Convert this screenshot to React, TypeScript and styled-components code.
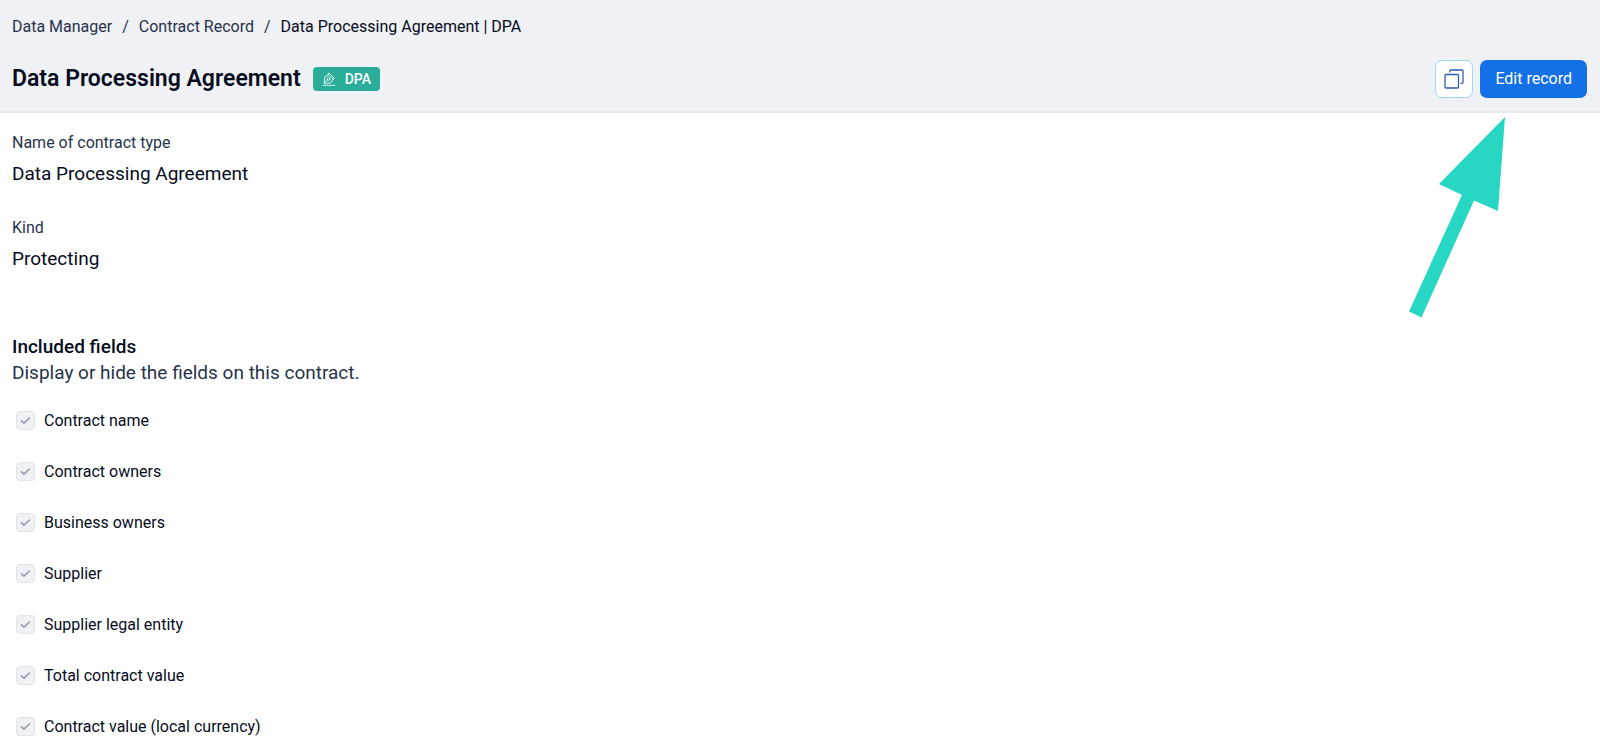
import React from "react";
import styled, { createGlobalStyle } from "styled-components";

const GlobalStyle = createGlobalStyle`
  *, *::before, *::after { box-sizing: border-box; }
  body {
    margin: 0;
    background: #ffffff;
    color: #070c1d;
    font-family: Roboto, "Liberation Sans", sans-serif;
    font-size: 16px;
    line-height: 24px;
    overflow-x: hidden;
    scrollbar-width: none;
  }
`;

const Page = styled.div`
  position: relative;
`;

const Header = styled.header`
  padding: 15px 13px 13px 12px;
  background: #f0f1f5;
  border-bottom: 2px solid #e6e8ed;
`;

const Crumbs = styled.ol`
  display: flex;
  gap: 10px;
  margin: 0;
  padding: 0;
  list-style: none;
  color: #26334b;
`;

const Crumb = styled.li`
  display: flex;
  gap: 10px;

  & + &::before {
    content: "/";
  }
`;

const CrumbLink = styled.a<{ $current?: boolean }>`
  color: ${(p) => (p.$current ? "#070c1d" : "inherit")};
  text-decoration: none;
`;

const TitleRow = styled.div`
  display: flex;
  align-items: center;
  justify-content: space-between;
  margin-top: 21px;
`;

const TitleGroup = styled.div`
  display: flex;
  align-items: center;
  gap: 12px;
`;

const Title = styled.h1`
  margin: 0;
  font-size: 23px;
  font-weight: 600;
  line-height: 32px;
`;

const Badge = styled.span`
  display: inline-flex;
  align-items: center;
  gap: 9px;
  height: 24px;
  padding: 0 9px;
  border-radius: 4px;
  background: #2aae9a;
  color: #ffffff;
  font-size: 14px;
  font-weight: 500;
`;

const Actions = styled.div`
  display: flex;
  gap: 7px;
`;

const IconButton = styled.button`
  display: flex;
  align-items: center;
  justify-content: center;
  width: 38px;
  height: 38px;
  padding: 0;
  border: 1px solid #9cd8fa;
  border-radius: 7px;
  background: #ffffff;
  color: #2d5eb0;
`;

const PrimaryButton = styled.button`
  height: 38px;
  padding: 0 15px;
  border: 0;
  border-radius: 7px;
  background: #1470e6;
  color: #ffffff;
  font: inherit;
`;

const Main = styled.main`
  padding: 18px 12px 0;
`;

const Details = styled.dl`
  display: grid;
  gap: 30px;
  margin: 0;
`;

const Label = styled.dt`
  color: #26334b;
`;

const Value = styled.dd`
  margin: 7px 0 0;
  font-size: 19px;
`;

const Fields = styled.fieldset`
  min-width: 0;
  margin: 63px 0 0;
  padding: 0;
  border: 0;
`;

const FieldsTitle = styled.legend`
  padding: 0;
  font-size: 19px;
  font-weight: 500;
  line-height: 26px;
`;

const Hint = styled.p`
  margin: 0 0 9px;
  color: #26334b;
  font-size: 19px;
  line-height: 26px;
`;

const FieldRow = styled.label`
  display: flex;
  align-items: center;
  gap: 9px;
  height: 51px;
  padding-left: 4px;
`;

const CheckBox = styled.span`
  display: grid;
  width: 19px;
  height: 19px;

  & > * {
    grid-area: 1 / 1;
    place-self: center;
  }
`;

const CheckInput = styled.input`
  appearance: none;
  width: 19px;
  height: 19px;
  margin: 0;
  border: 1px solid #e0e3ea;
  border-radius: 4px;
  background: #f0f1f5;
`;

const Arrow = styled.svg`
  position: absolute;
  top: 117px;
  right: 94px;
  pointer-events: none;
`;

const included = [
  "Contract name",
  "Contract owners",
  "Business owners",
  "Supplier",
  "Supplier legal entity",
  "Total contract value",
  "Contract value (local currency)",
];

const PenIcon = () => (
  <svg width="14" height="14" viewBox="0 0 14 14" fill="none" stroke="#ffffff" strokeOpacity="0.85" strokeLinecap="round" strokeLinejoin="round" aria-hidden="true">
    <path d="M1 13.3h12" />
    <path d="M2.200 10.900 2.800 5 6.300 2.800 11 7.200 8.800 10.600Z" />
    <path d="M6 2.900 6.800 1 12.600 6.400 11 7.200" />
    <path d="m2.400 10.700 3.200-2.800" />
    <circle cx="6.500" cy="7" r="1.300" />
  </svg>
);

const CopyIcon = () => (
  <svg width="20" height="20" viewBox="0 0 20 20" fill="none" stroke="currentColor" strokeWidth="1.3" strokeLinecap="round" strokeLinejoin="round" aria-hidden="true">
    <rect x="1" y="5.5" width="13.5" height="13.5" rx="1" />
    <path d="M5.8 3V2a1 1 0 0 1 1-1H18a1 1 0 0 1 1 1v11.3a1 1 0 0 1-1 1h-1" />
  </svg>
);

const CheckIcon = () => (
  <svg width="11" height="9" viewBox="0 0 11 9" fill="none" stroke="#929cb3" strokeWidth="1.6" strokeLinecap="round" strokeLinejoin="round" aria-hidden="true">
    <path d="m1.400 4.800 2.600 2.400 5.400-5.200" />
  </svg>
);

export default function App() {
  return (
    <Page>
      <GlobalStyle />
      <Header>
        <nav aria-label="Breadcrumb">
          <Crumbs>
            <Crumb><CrumbLink href="#manager">Data Manager</CrumbLink></Crumb>
            <Crumb><CrumbLink href="#contracts">Contract Record</CrumbLink></Crumb>
            <Crumb><CrumbLink href="#dpa" $current aria-current="page">Data Processing Agreement | DPA</CrumbLink></Crumb>
          </Crumbs>
        </nav>
        <TitleRow>
          <TitleGroup>
            <Title>Data Processing Agreement</Title>
            <Badge><PenIcon />DPA</Badge>
          </TitleGroup>
          <Actions>
            <IconButton type="button" aria-label="Duplicate record"><CopyIcon /></IconButton>
            <PrimaryButton type="button">Edit record</PrimaryButton>
          </Actions>
        </TitleRow>
      </Header>
      <Main>
        <Details>
          <div>
            <Label>Name of contract type</Label>
            <Value>Data Processing Agreement</Value>
          </div>
          <div>
            <Label>Kind</Label>
            <Value>Protecting</Value>
          </div>
        </Details>
        <Fields>
          <FieldsTitle>Included fields</FieldsTitle>
          <Hint>Display or hide the fields on this contract.</Hint>
          {included.map((name) => (
            <FieldRow key={name}>
              <CheckBox>
                <CheckInput type="checkbox" defaultChecked disabled />
                <CheckIcon />
              </CheckBox>
              {name}
            </FieldRow>
          ))}
        </Fields>
      </Main>
      <Arrow width="97" height="201" viewBox="0 0 97 201" aria-hidden="true">
        <path d="M96 0 30 67l23 11L0 194.500l12.500 6L65 83.500 89 94Z" fill="#27d7c4" />
      </Arrow>
    </Page>
  );
}
